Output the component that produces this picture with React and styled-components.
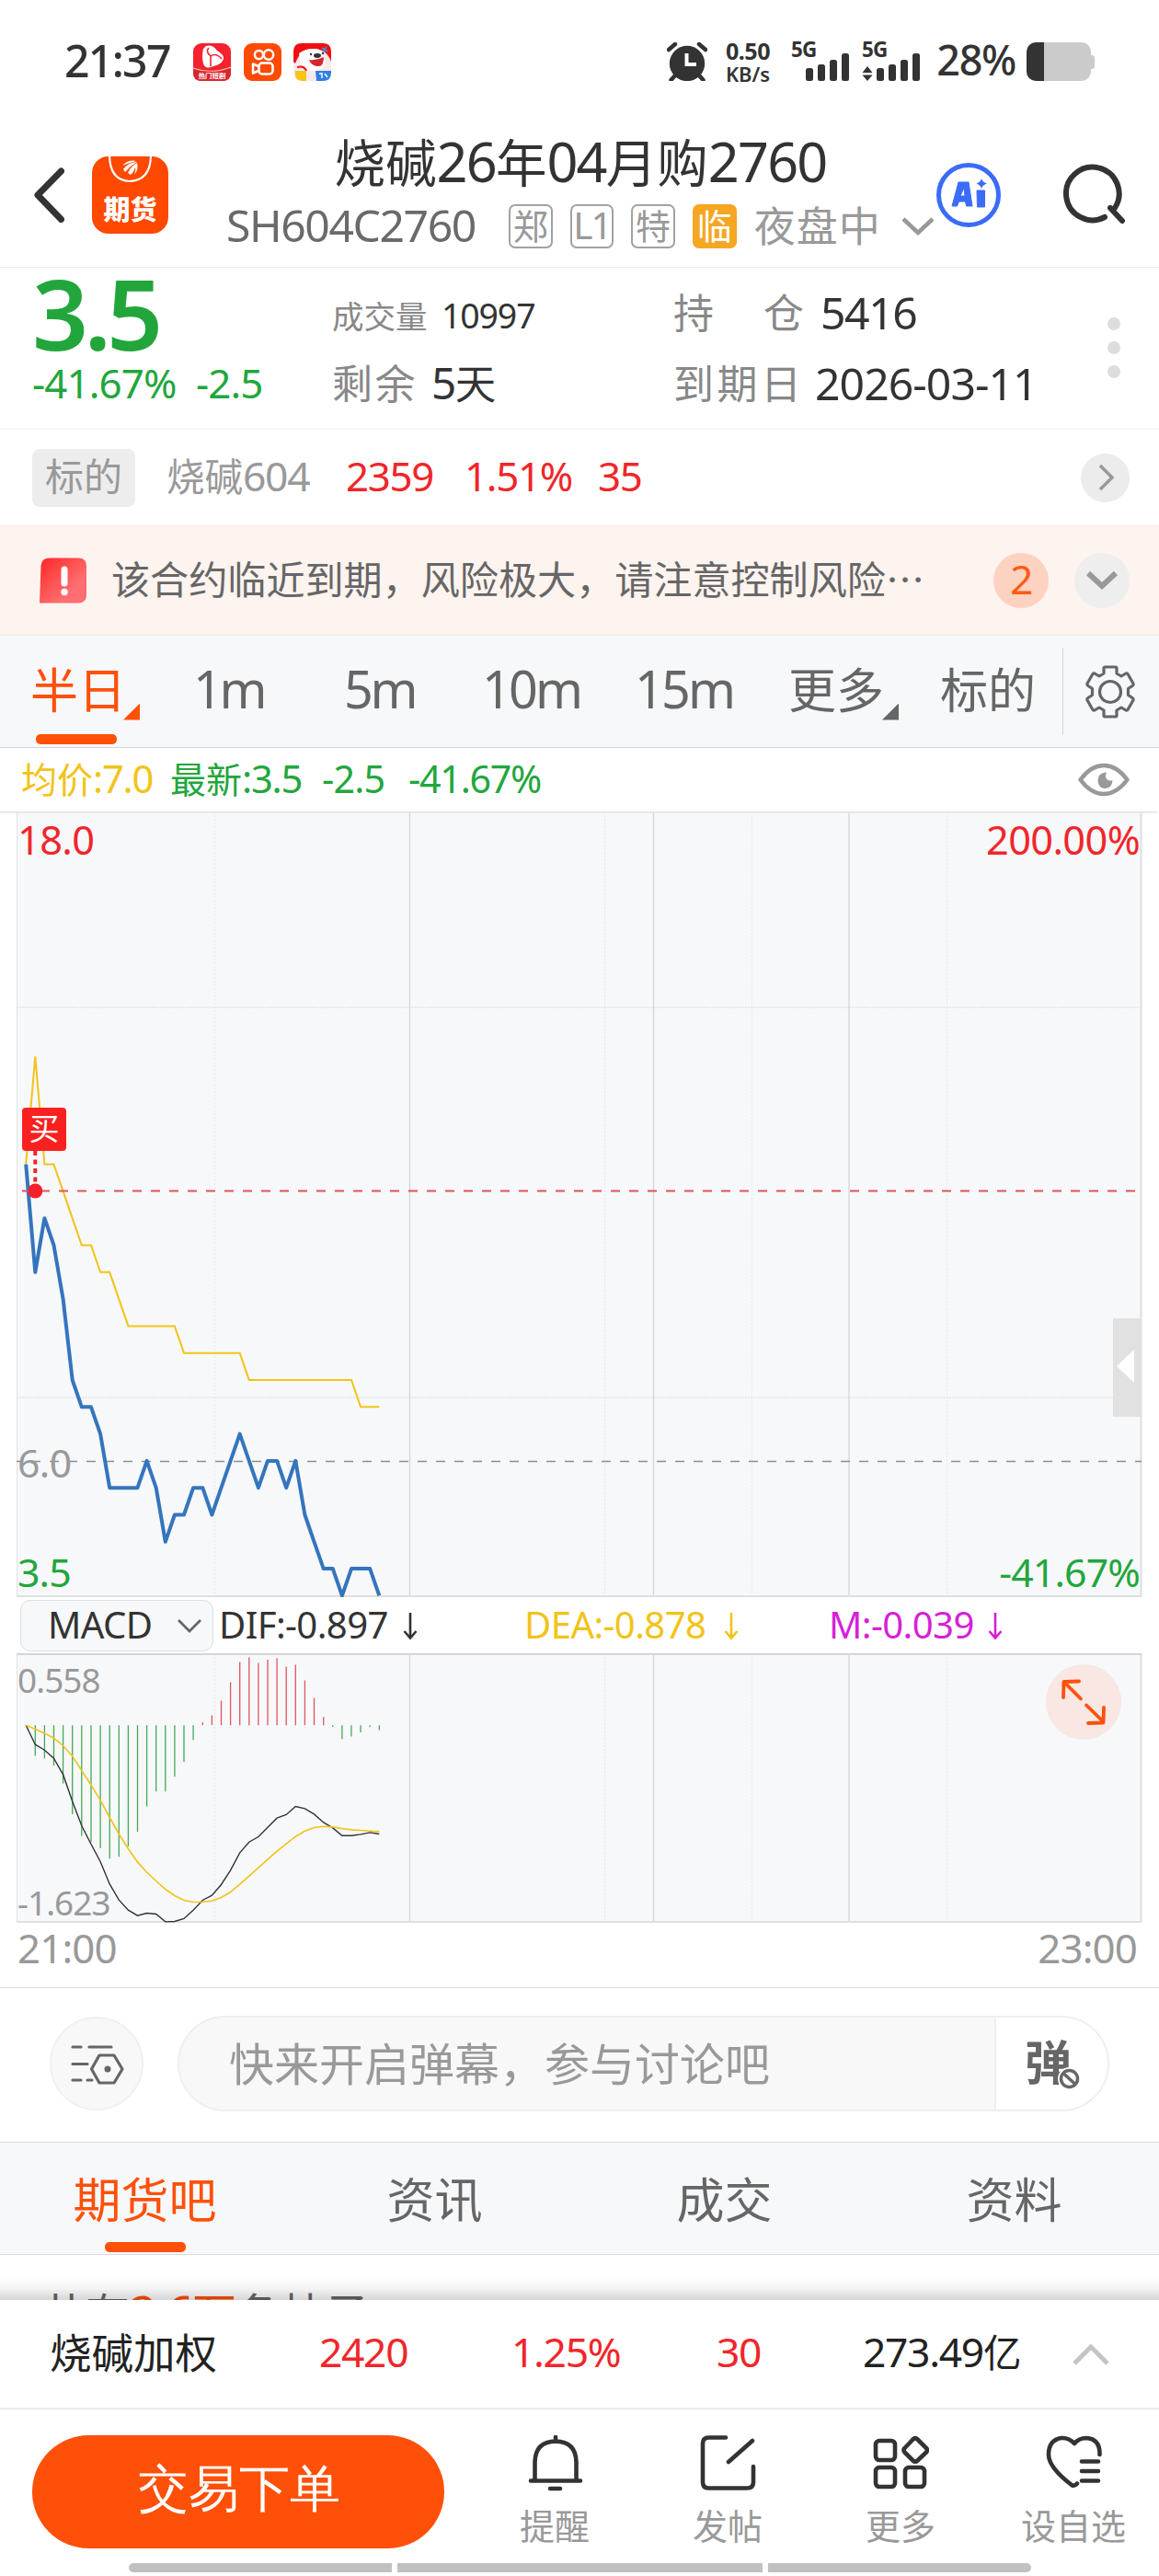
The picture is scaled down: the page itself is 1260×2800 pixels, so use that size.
import React from 'react';
import styled, { createGlobalStyle } from 'styled-components';

const RED = '#f0262a';
const GREEN = '#22a63c';
const ORANGE = '#ff500a';
const YELLOW = '#f2c318';
const GRAY = '#999';
const DARK = '#333';

const Global = createGlobalStyle`
  * { box-sizing: border-box; }
  html, body { margin: 0; padding: 0; background: #fff; }
  body { font-family: "Noto Sans CJK SC", sans-serif; }
  svg { display: block; flex: none; }
`;

/* ---------- text ---------- */
const TextBox = styled.span`
  display: block;
  flex: none;
  white-space: pre;
  line-height: 1;
  padding-bottom: 0.12em;
  font-size: ${(p) => p.$s}px;
  color: ${(p) => p.$c || DARK};
  font-weight: ${(p) => p.$b || 400};
  letter-spacing: ${(p) => p.$g || 0}px;
  width: ${(p) => (p.$w ? `${p.$w}px` : 'auto')};
  text-align: ${(p) => p.$a || 'left'};
`;
const Latin = styled.span`
  font-family: "Noto Sans", sans-serif;
  font-size: 1.07em;
  line-height: 0;
  letter-spacing: ${(p) => p.$ls}em;
`;

const LATIN_RUN = /([\x20-\x7e]+)/;
function Text({ children, ls = -0.03, ...rest }) {
  const parts = String(children).split(LATIN_RUN);
  return (
    <TextBox {...rest}>
      {parts.map((part, i) => (i % 2 ? <Latin key={i} $ls={ls}>{part}</Latin> : part))}
    </TextBox>
  );
}

/* ---------- shared layout ---------- */
const Page = styled.div`
  width: 1260px;
  height: 2800px;
  overflow: hidden;
  background: #fff;
  display: flex;
  flex-direction: column;
`;
const Row = styled.div`
  display: flex;
  align-items: center;
  flex: none;
  height: ${(p) => p.$h}px;
`;
const Spacer = styled.div`flex: 1;`;
const Disc = styled.div`
  display: flex;
  align-items: center;
  justify-content: center;
  flex: none;
  width: ${(p) => p.$d}px;
  height: ${(p) => p.$d}px;
  border-radius: 50%;
  background: ${(p) => p.$bg};
`;

/* ---------- status bar ---------- */
const Status = styled(Row)`
  padding: 0 70px 0 70px;
`;
const AppIcons = styled.div`
  display: flex;
  gap: 13.5px;
`;
const NetSpeed = styled.div`
  display: flex;
  flex-direction: column;
  align-items: center;
  justify-content: space-between;
  width: 54px;
  height: 46px;
  margin-left: 17px;
`;
const Signal = styled.div`
  display: flex;
  flex-direction: column;
  width: 66px;
  height: 42px;
  margin-left: ${(p) => p.$ml}px;
`;
const SignalLabel = styled.div`height: 12px; margin-top: -3px;`;
const Battery = styled.div`
  width: 70px;
  height: 42px;
  border-radius: 10px;
  margin-left: 12px;
  background: linear-gradient(90deg, #333 19px, #cbcbcb 19px);
`;
const BatteryTip = styled.div`
  width: 4px;
  height: 15px;
  border-radius: 0 3px 3px 0;
  background: #cbcbcb;
`;

function StatusBar() {
  return (
    <Status $h={134}>
      <Text $s={45} $b={500} $w={140} ls={-0.035}>21:37</Text>
      <AppIcons>
        <svg width="41" height="41" viewBox="0 0 41 41">
          <rect width="41" height="41" rx="9" fill="#f3222e" />
          <path d="M0 27 Q20 34 41 26 V32 Q41 41 32 41 H9 Q0 41 0 32Z" fill="#d9262e" />
          <path d="M0 27 Q20 34 41 26" stroke="#f9b5a5" strokeWidth="1.2" fill="none" />
          <path d="M14 3 Q21 1 26 8 Q34 13 33 17 Q31 23 22 25 Q13 29 11 22 Q9 14 11 6Z" fill="#fff" />
          <path d="M17 5 Q13 9 19 14 L19 25 M19 14 Q25 10 31 17" stroke="#f3222e" strokeWidth="1.6" fill="none" />
          <text x="20.5" y="38" fontSize="7.4" fontWeight="700" fill="#fff" textAnchor="middle" fontFamily="Noto Sans CJK SC">热门短剧</text>
        </svg>
        <svg width="41" height="41" viewBox="0 0 41 41">
          <rect width="41" height="41" rx="9" fill="#ff4a06" />
          <g fill="none" stroke="#fff" strokeWidth="2.5">
            <circle cx="16.5" cy="12.5" r="4.6" />
            <circle cx="27" cy="12.5" r="5.2" />
            <rect x="16.5" y="21.5" width="15" height="12" rx="3.5" />
            <path d="M16 25 L10 22.5 V32.5 L16 30" strokeLinejoin="round" />
          </g>
        </svg>
        <svg width="41" height="41" viewBox="0 0 41 41">
          <rect width="41" height="41" rx="9" fill="#f8e9ea" />
          <path d="M0 20 V9 Q0 0 9 0 H32 Q41 0 41 9 V20 Q36 6 22 6 Q8 5 2 22Z" fill="#f20d12" />
          <path d="M6 11 Q16 4 28 7 Q36 14 34 25 Q28 31 17 30 Q9 26 8 20Z" fill="#fff" />
          <ellipse cx="26" cy="13.5" rx="4" ry="2.4" fill="#333" />
          <circle cx="19" cy="12" r="1.2" fill="#333" />
          <circle cx="32" cy="11" r="1.2" fill="#333" />
          <path d="M17 18 Q25 19 33 15 Q33 26 26 25 Q19 24 17 18Z" fill="#d8242a" />
          <path d="M31 5 L37 9 M36 4 L32 9" stroke="#4a90c8" strokeWidth="2" />
          <path d="M4 26 Q12 24 14 30" stroke="#f20d12" strokeWidth="2" fill="none" />
          <path d="M2 30 H14 V41 H9 Q2 40 2 34Z" fill="#fcc419" />
          <path d="M24 30 H41 V32 Q41 41 32 41 H25Z" fill="#2f7fe6" />
          <path d="M28 33 h3 v5 M34 33 l3 4" stroke="#fff" strokeWidth="1.5" fill="none" />
        </svg>
      </AppIcons>
      <Spacer />
      <svg width="44" height="42" viewBox="0 0 44 42">
        <circle cx="22" cy="23" r="19.2" fill={DARK} />
        <path d="M2 8 L9 2 M42 8 L35 2" stroke={DARK} strokeWidth="4.5" strokeLinecap="round" />
        <path d="M9 36 L4.500 41 M35 36 L39.500 41" stroke={DARK} strokeWidth="4.500" strokeLinecap="round" />
        <path d="M21.500 12 V24 H32" stroke="#fff" strokeWidth="4" fill="none" />
      </svg>
      <NetSpeed>
        <Text $s={23.500} $b={700} ls={-0.02}>0.50</Text>
        <Text $s={20.500} $b={600} ls={0}>KB/s</Text>
      </NetSpeed>
      <Signal $ml={20}>
        <SignalLabel><Text $s={21} $b={700} ls={-0.04}>5G</Text></SignalLabel>
        <svg width="66" height="33" viewBox="0 0 66 33">
          {[[16, 16], [29, 12], [42, 7], [55, 0]].map(([x, y]) => (
            <rect key={x} x={x} y={y + 3} width="8" height={30 - y} rx="2.500" fill={DARK} />
          ))}
        </svg>
      </Signal>
      <Signal $ml={11}>
        <SignalLabel><Text $s={21} $b={700} ls={-0.04}>5G</Text></SignalLabel>
        <svg width="66" height="33" viewBox="0 0 66 33">
          <path d="M0.500 24 L6 17 L11.500 24Z M0.500 26.500 L6 33 L11.500 26.500Z" fill={DARK} />
          {[[16, 16], [29, 12], [42, 7], [55, 0]].map(([x, y]) => (
            <rect key={x} x={x} y={y + 3} width="8" height={30 - y} rx="2.500" fill={DARK} />
          ))}
        </svg>
      </Signal>
      <Text $s={42} $b={500} $w={101} $a="right" ls={-0.03}>28%</Text>
      <Battery />
      <BatteryTip />
    </Status>
  );
}

/* ---------- header ---------- */
const HeaderBar = styled(Row)`
  padding-left: 37px;
  border-bottom: 1px solid #eaeaea;
`;
const AppLogo = styled.div`
  position: relative;
  display: flex;
  flex: none;
  align-items: flex-end;
  justify-content: center;
  width: 83px;
  height: 84px;
  padding-bottom: 10px;
  margin-left: 30px;
  border-radius: 18px;
  background: #ff4800;
  overflow: hidden;
`;
const LogoMark = styled.svg`
  position: absolute;
  top: 0;
  left: 0;
`;
const TitleCol = styled.div`
  width: 770px;
  margin-left: 63px;
  flex: none;
`;
const TitleRow = styled(Row)`justify-content: center;`;
const Tag = styled.div`
  display: flex;
  align-items: center;
  justify-content: center;
  flex: none;
  width: 47.500px;
  height: 47.500px;
  margin-right: 19.200px;
  border-radius: 7px;
  border: 2px solid ${(p) => (p.$on ? '#f5a623' : '#a2a2a2')};
  background: ${(p) => (p.$on ? '#f5a623' : '#fff')};
`;

function Header() {
  return (
    <HeaderBar $h={157}>
      <svg width="33" height="60" viewBox="0 0 33 60">
        <path d="M29.500 4 L4 30 L29.500 56.500" stroke={DARK} strokeWidth="7" strokeLinecap="round" strokeLinejoin="round" fill="none" />
      </svg>
      <AppLogo>
        <LogoMark width="83" height="40" viewBox="0 0 83 40">
          <path d="M19 -2 Q19 26 41 27 Q64 26 64 -2" stroke="#fff" strokeWidth="2.200" fill="none" />
          <path d="M33 10 Q40 3 48 5 Q40 7 33 10Z M34 14 Q40 6 49 6 Q42 10 36 17Z M39 18 Q42 11 49 7 Q51 14 46 20 Q48 14 47 12 Q45 18 42 20Z" fill="#fff" />
        </LogoMark>
        <Text $s={29} $b={900} $c="#fff">期货</Text>
      </AppLogo>
      <TitleCol>
        <TitleRow $h={68}><Text $s={55.500}>烧碱26年04月购2760</Text></TitleRow>
        <Row $h={68}>
          <Text $s={45} $c="#6a6a6a" $w={307}>SH604C2760</Text>
          <Tag><Text $s={38} $c={GRAY}>郑</Text></Tag>
          <Tag><Text $s={38} $c={GRAY} ls={-0.05}>L1</Text></Tag>
          <Tag><Text $s={38} $c={GRAY}>特</Text></Tag>
          <Tag $on><Text $s={38} $c="#fff">临</Text></Tag>
          <Text $s={45} $c={GRAY} $w={160} $g={1}>夜盘中</Text>
          <svg width="36" height="22" viewBox="0 0 36 22">
            <path d="M2 3 L18 18 L34 3" stroke={GRAY} strokeWidth="4.500" fill="none" />
          </svg>
        </Row>
      </TitleCol>
      <svg width="72" height="72" viewBox="0 0 72 72">
        <circle cx="37" cy="36" r="32.500" stroke="#3b6cf6" strokeWidth="5" fill="none" />
        <path d="M19 48 L26 22 H37 L41 48 H34.500 L33.600 43 H26.500 L24.500 48Z M28 37 H33 L32 28Z" fill="#3b6cf6" fillRule="evenodd" stroke="#3b6cf6" strokeLinejoin="round" />
        <path d="M46 31 H54.500 V49 H46.500Z" fill="#3b6cf6" stroke="#3b6cf6" strokeLinejoin="round" />
        <path d="M51 18 Q52 22 57 23.500 Q52 25 51 29 Q50 25 45.500 23.500 Q50 22 51 18Z" fill="#3b6cf6" />
      </svg>
      <Spacer />
      <svg width="104" height="72" viewBox="0 0 104 72">
        <path d="M45 60 A28.800 28.800 0 1 1 56 50 M51 50 L64 64" stroke={DARK} strokeWidth="6" fill="none" strokeLinecap="round" />
      </svg>
    </HeaderBar>
  );
}

/* ---------- quote ---------- */
const Quote = styled.section`
  display: flex;
  flex: none;
  height: 176px;
  padding-left: 35px;
  border-bottom: 1px solid #f1f1f1;
`;
const QuoteCol = styled.div`
  width: ${(p) => p.$w}px;
  flex: none;
`;
const Dots = styled.div`
  display: flex;
  flex-direction: column;
  gap: 12px;
  margin: 54px 0 0 71px;
`;
const Dot = styled.i`
  width: 14px;
  height: 14px;
  border-radius: 50%;
  background: #ddd;
`;

function QuotePanel() {
  return (
    <Quote>
      <QuoteCol $w={326}>
        <Row $h={106}><Text $s={100} $b={600} $c={GREEN} ls={-0.045}>3.5</Text></Row>
        <Row $h={42}>
          <Text $s={41} $c={GREEN} $w={178} ls={-0.02}>-41.67%</Text>
          <Text $s={41} $c={GREEN} ls={-0.02}>-2.5</Text>
        </Row>
      </QuoteCol>
      <QuoteCol $w={371}>
        <Row $h={106}>
          <Text $s={34.500} $c="#888" $w={119}>成交量</Text>
          <Text $s={35}>10997</Text>
        </Row>
        <Row $h={42}>
          <Text $s={44} $c="#888" $g={2.500} $w={108}>剩余</Text>
          <Text $s={44.500}>5天</Text>
        </Row>
      </QuoteCol>
      <QuoteCol $w={401}>
        <Row $h={100}>
          <Text $s={44} $c="#888" $w={98}>持</Text>
          <Text $s={44} $c="#888" $w={62}>仓</Text>
          <Text $s={45}>5416</Text>
        </Row>
        <Row $h={54}>
          <Text $s={44} $c="#888" $g={3.500} $w={154}>到期日</Text>
          <Text $s={45} ls={-0.02}>2026-03-11</Text>
        </Row>
      </QuoteCol>
      <Dots><Dot /><Dot /><Dot /></Dots>
    </Quote>
  );
}

const UnderlyingRow = styled(Row)`padding: 0 32px 0 35px;`;
const Badge = styled.div`
  display: flex;
  align-items: center;
  justify-content: center;
  width: 112px;
  height: 63px;
  margin-right: 34px;
  border-radius: 8px;
  background: #ededed;
`;

function Underlying() {
  return (
    <UnderlyingRow $h={104}>
      <Badge><Text $s={42} $c={GRAY}>标的</Text></Badge>
      <Text $s={41.500} $c={GRAY} $w={195}>烧碱604</Text>
      <Text $s={41} $c={RED} $w={129}>2359</Text>
      <Text $s={41} $c={RED} $w={145}>1.51%</Text>
      <Text $s={41} $c={RED}>35</Text>
      <Spacer />
      <Disc $d={53} $bg="#ececec">
        <svg width="20" height="32" viewBox="0 0 20 32">
          <path d="M4 3 L17 16 L4 29" stroke={GRAY} strokeWidth="3.500" fill="none" />
        </svg>
      </Disc>
    </UnderlyingRow>
  );
}

const NoticeBar = styled(Row)`
  padding: 0 32px 0 43px;
  background: #fdf3ef;
  border-top: 1px solid #f1e8e5;
`;
const NoticeText = styled.div`
  width: 1010px;
  margin-left: 26px;
  width: 960px;
`;
const DiscGap = styled.div`width: 28px;`;

function Notice() {
  return (
    <NoticeBar $h={119}>
      <svg width="52" height="50" viewBox="0 0 52 50">
        <defs>
          <linearGradient id="alert" x1="0" y1="0" x2="1" y2="1">
            <stop offset="0" stopColor="#ff2626" />
            <stop offset="0.700" stopColor="#ff6e70" />
          </linearGradient>
        </defs>
        <path d="M1.500 9 Q2 0.500 11 0.500 H42 Q51 0.500 51 9 V41 Q51 49.500 42 49.500 H0Z" fill="url(#alert)" />
        <rect x="23.500" y="9.500" width="7" height="22" rx="3.500" fill="#fff" />
        <circle cx="27" cy="37.500" r="3.700" fill="#fff" />
      </svg>
      <NoticeText><Text $s={42.100} $c="#666">该合约临近到期，风险极大，请注意控制风险⋯</Text></NoticeText>
      <Spacer />
      <Disc $d={60} $bg="#fdd2c1"><Text $s={41} $c="#ff5a10">2</Text></Disc>
      <DiscGap />
      <Disc $d={60} $bg="#eeeeee">
        <svg width="34" height="24" viewBox="0 0 34 24">
          <path d="M2 4 L17 18 L32 4" stroke={GRAY} strokeWidth="6" fill="none" />
        </svg>
      </Disc>
    </NoticeBar>
  );
}

/* ---------- period tabs ---------- */
const PeriodBar = styled(Row)`
  padding: 0 26px 0 33px;
  background: #f7f8fa;
  border-top: 1px solid #eee;
  border-bottom: 1px solid #d3d4d8;
`;
const Period = styled.div`
  position: relative;
  display: flex;
  align-items: center;
  height: 100%;
  flex: none;
  width: ${(p) => p.$w}px;
`;
const Corner = styled.i`
  width: 18px;
  height: 18px;
  margin: 44px 0 0 -3px;
  background: ${(p) => p.$c};
  clip-path: polygon(100% 0, 100% 100%, 0 100%);
`;
const Underline = styled.i`
  position: absolute;
  left: ${(p) => p.$x};
  bottom: ${(p) => p.$y}px;
  width: 88px;
  height: 11px;
  border-radius: 5px;
  background: ${ORANGE};
`;
const Rule = styled.div`
  width: 1px;
  height: 95px;
  background: #d5d6da;
`;
const Legend = styled(Row)`
  padding: 0 32px 0 23px;
`;

function Periods() {
  return (
    <>
      <PeriodBar $h={123}>
        <Period $w={177}>
          <Text $s={52} $c={ORANGE} $w={104}>半日</Text><Corner $c={ORANGE} />
          <Underline $x="6px" $y={3} />
        </Period>
        <Period $w={164}><Text $s={52} $c="#666" ls={-0.06}>1m</Text></Period>
        <Period $w={150}><Text $s={52} $c="#666" ls={-0.06}>5m</Text></Period>
        <Period $w={166}><Text $s={52} $c="#666" ls={-0.05}>10m</Text></Period>
        <Period $w={167}><Text $s={52} $c="#666" ls={-0.05}>15m</Text></Period>
        <Period $w={165}><Text $s={52} $c="#666" $w={105}>更多</Text><Corner $c="#666" /></Period>
        <Period $w={133}><Text $s={52} $c="#666">标的</Text></Period>
        <Rule />
        <Spacer />
        <svg width="54" height="58" viewBox="-27 -29 54 58">
          <path
            d="M-7 -22 V-25.500 Q-7 -27 -5.500 -27 H5.500 Q7 -27 7 -25.500 V-20 L12 -17 L17 -20 Q18.500 -20.500 19.300 -19 L25 -9 Q25.500 -7.500 24 -6.500 L19.500 -3.500 V3.500 L24 6.500 Q25.500 7.500 25 9 L19.300 19 Q18.500 20.500 17 20 L12 17 L7 20 V25.500 Q7 27 5.500 27 H-5.500 Q-7 27 -7 25.500 V20 L-12 17 L-17 20 Q-18.500 20.500 -19.300 19 L-25 9 Q-25.500 7.500 -24 6.500 L-19.500 3.500 V-3.500 L-24 -6.500 Q-25.500 -7.500 -25 -9 L-19.300 -19 Q-18.500 -20.500 -17 -20 L-12 -17 L-7 -20Z"
            fill="none" stroke="#666" strokeWidth="3.200" strokeLinejoin="round"
          />
          <circle r="11.500" fill="none" stroke="#666" strokeWidth="3.200" />
        </svg>
      </PeriodBar>
      <Legend $h={69}>
        <Text $s={39} $c={YELLOW} $w={162}>均价:7.0</Text>
        <Text $s={39} $c={GREEN} $w={165}>最新:3.5</Text>
        <Text $s={38.500} $c={GREEN} $w={94} ls={-0.02}>-2.5</Text>
        <Text $s={38.500} $c={GREEN} ls={-0.03}>-41.67%</Text>
        <Spacer />
        <svg width="56" height="37" viewBox="0 0 56 37">
          <path d="M2.500 18.500 Q14 3 28 3 Q42 3 53.500 18.500 Q42 34 28 34 Q14 34 2.500 18.500Z" fill="none" stroke={GRAY} strokeWidth="4.500" strokeLinejoin="round" />
          <path d="M29 10.500 Q21.500 12 21.500 19.500 Q22 28 29.500 28 Q37 27.500 37.500 19 Q33 20.500 31 17.500 Q29 14.500 31 11Z" fill={GRAY} />
        </svg>
      </Legend>
    </>
  );
}

/* ---------- charts ---------- */
const STEP = 10.108;
const X0 = 28.2;
const PRICE = [11.5, 9.5, 10.5, 10, 9, 7.5, 7, 7, 6.5, 5.5, 5.5, 5.5, 5.5, 6, 5.5, 4.5, 5, 5, 5.5, 5.5, 5, 5.5, 6, 6.5, 6, 5.5, 6, 6, 5.5, 6, 5, 4.5, 4, 4, 3.5, 4, 4, 4, 3.5];
const AVERAGE = [11.5, 13.5, 11.5, 11.5, 11, 10.5, 10, 10, 9.5, 9.5, 9, 8.5, 8.5, 8.5, 8.5, 8.5, 8.5, 8, 8, 8, 8, 8, 8, 8, 7.5, 7.5, 7.5, 7.5, 7.5, 7.5, 7.5, 7.5, 7.5, 7.5, 7.5, 7.5, 7, 7, 7];
/* MACD series as offsets from the zero axis, in thirds of a pixel */
const HIST = [0, 100, 108, 132, 190, 290, 361, 381, 401, 435, 429, 395, 348, 265, 216, 216, 168, 120, 48, -10, -32, -80, -140, -206, -221, -203, -214, -218, -191, -197, -146, -89, -27, 5, 45, 37, 23, 6, 16];
const DIF = [0, 63, 81, 108, 161, 248, 328, 388, 445, 518, 570, 603, 621, 613, 616, 641, 640, 631, 603, 571, 555, 520, 473, 416, 381, 364, 333, 303, 292, 265, 272, 290, 317, 335, 360, 360, 356, 350, 355];
const DEA = [0, 13, 26, 42, 67, 101, 148, 195, 245, 301, 355, 403, 446, 480, 508, 535, 556, 571, 577, 576, 573, 562, 544, 519, 492, 465, 438, 411, 387, 363, 345, 334, 330, 332, 337, 341, 343, 345, 347];

const px = (i) => X0 + i * STEP;
const line = (values, y) => values.map((v, i) => `${px(i).toFixed(1)},${y(v).toFixed(1)}`).join(' ');
const priceY = (v) => 852.4 - (v - 3.5) * 58.6;
const macdY = (v) => 78.200 + v / 3;

const Plot = styled.div`
  position: relative;
  flex: none;
  height: ${(p) => p.$h}px;
`;
const Mark = styled.div`
  position: absolute;
  top: ${(p) => p.$y}px;
  ${(p) => (p.$r ? `right: ${p.$r}px;` : `left: ${p.$x}px;`)}
`;
const BuyFlag = styled.div`
  position: absolute;
  left: 24px;
  top: 322px;
  width: 48px;
  height: 47px;
  display: flex;
  align-items: center;
  justify-content: center;
  border-radius: 4px;
  background: #fb2020;
`;

function Grid({ h, rows }) {
  return (
    <>
      <rect x="18" y="0" width="1223" height={h} fill="#f7f8fa" />
      {[233.5, 657.5, 817.5, 1029.5].map((x) => (
        <path key={x} d={`M${x} 0 V${h}`} stroke="#e6e7ea" strokeDasharray="2 2" />
      ))}
      {rows.map((y) => (
        <path key={y} d={`M18 ${y} H1241`} stroke="#dcdde0" strokeDasharray="2 1" />
      ))}
      {[445.5, 710.5, 923].map((x) => (
        <path key={x} d={`M${x} 0 V${h}`} stroke="#d4d5d8" strokeWidth="1.300" />
      ))}
      <path d={`M18.500 0 V${h}`} stroke="#e0e1e4" />
      <path d={`M1240.500 0 V${h}`} stroke="#dddee1" strokeWidth="2" />
      <path d={`M18 ${h - 1} H1241`} stroke="#dfe0e2" strokeWidth="2" />
    </>
  );
}

function PriceChart() {
  return (
    <Plot $h={854}>
      <svg width="1260" height="854" viewBox="0 0 1260 854">
        <Grid h={854} rows={[213, 637]} />
        <path d="M0 0 H1258" stroke="#e2e2e4" strokeWidth="3" />
        <path d="M18 706.500 H1241" stroke="#8d8d8d" strokeWidth="1.500" strokeDasharray="10 10" strokeDashoffset="4" />
        <polyline points={line(AVERAGE, priceY)} fill="none" stroke={YELLOW} strokeWidth="2" />
        <polyline points={line(PRICE, priceY)} fill="none" stroke="#3475bd" strokeWidth="4" strokeLinejoin="round" />
        <path d="M24 412.500 H1241" stroke="#dd5558" strokeWidth="2" strokeDasharray="10 10" />
        <path d="M38.300 369 V406" stroke="#f32227" strokeWidth="4" strokeDasharray="5 4.500" />
        <circle cx="38.300" cy="412.500" r="8" fill="#f5212a" />
        <rect x="1210" y="551" width="31" height="107" fill="#e1e1e1" />
        <path d="M1214 603 L1233 585 V621Z" fill="#fff" />
      </svg>
      <BuyFlag><Text $s={33} $c="#fff">买</Text></BuyFlag>
      <Mark $x={19} $y={10}><Text $s={40.500} $c={RED} ls={-0.015}>18.0</Text></Mark>
      <Mark $r={21} $y={10}><Text $s={40.500} $c={RED} ls={-0.015}>200.00%</Text></Mark>
      <Mark $x={19} $y={687}><Text $s={40} $c={GRAY} ls={-0.015}>6.0</Text></Mark>
      <Mark $x={19} $y={806}><Text $s={40} $c={GREEN} ls={-0.02}>3.5</Text></Mark>
      <Mark $r={21} $y={806}><Text $s={40} $c={GREEN} ls={-0.02}>-41.67%</Text></Mark>
    </Plot>
  );
}

const IndicatorRow = styled(Row)`
  padding-left: 22px;
`;
const Select = styled.div`
  display: flex;
  align-items: center;
  flex: none;
  width: 210px;
  height: 56px;
  padding-left: 29px;
  margin-right: 6px;
  border: 1px solid #dcdde0;
  border-radius: 11px;
  background: #f7f8fa;
`;
const Value = styled.div`
  display: flex;
  align-items: center;
  flex: none;
  width: ${(p) => p.$w}px;
`;

function Indicator({ label, color, width, text }) {
  return (
    <Value $w={width}>
      <Text $s={37.500} $c={color} $w={text} ls={-0.015}>{label}</Text>
      <svg width="16" height="32" viewBox="0 0 16 32">
        <path d="M8 2 V29 M1.500 22 L8 29.500 L14.500 22" stroke={color} strokeWidth="2.600" fill="none" />
      </svg>
    </Value>
  );
}

const ExpandButton = styled(Disc)`
  position: absolute;
  left: 1137px;
  top: 12px;
`;
const TimeAxis = styled(Row)`
  justify-content: space-between;
  padding: 4px 24px 0 19px;
  margin-bottom: 16px;
`;

function MacdChart() {
  return (
    <>
      <IndicatorRow $h={61}>
        <Select>
          <Text $s={37.500} $w={140} ls={-0.015}>MACD</Text>
          <svg width="28" height="18" viewBox="0 0 28 18">
            <path d="M2 3 L14 15 L26 3" stroke="#666" strokeWidth="2.800" fill="none" />
          </svg>
        </Select>
        <Indicator label="DIF:-0.897" color={DARK} width={332} text={200} />
        <Indicator label="DEA:-0.878" color={YELLOW} width={331} text={217} />
        <Indicator label="M:-0.039" color="#d81fd8" width={200} text={173} />
      </IndicatorRow>
      <Plot $h={293}>
        <svg width="1260" height="293" viewBox="0 0 1260 293">
          <Grid h={293} rows={[]} />
          <path d="M18 1 H1241" stroke="#d5d6d9" strokeWidth="2" />
          {HIST.map((v, i) => (
            <path key={i} d={`M${px(i).toFixed(1)} ${macdY(0)} V${macdY(v).toFixed(1)}`} stroke={v < 0 ? '#e0555a' : '#43aa58'} strokeWidth="1.300" />
          ))}
          <polyline points={line(DIF, macdY)} fill="none" stroke="#333" strokeWidth="1.400" />
          <polyline points={line(DEA, macdY)} fill="none" stroke={YELLOW} strokeWidth="1.600" />
        </svg>
        <Mark $x={19} $y={11}><Text $s={34.500} $c={GRAY} ls={-0.025}>0.558</Text></Mark>
        <Mark $x={19} $y={253}><Text $s={34.500} $c={GRAY} ls={-0.025}>-1.623</Text></Mark>
        <ExpandButton $d={82} $bg="#f8e7e3">
          <svg width="52" height="52" viewBox="0 0 52 52">
            <path d="M4 21 L4.500 4 L21 3.500 M5.500 5 L23 22.500 M29 29.500 L47 47 M48 32 L47.500 48.500 L31 49" stroke={ORANGE} strokeWidth="3.800" fill="none" strokeLinecap="round" strokeLinejoin="round" />
          </svg>
        </ExpandButton>
      </Plot>
      <TimeAxis $h={54}>
        <Text $s={41} $c={GRAY} ls={-0.02}>21:00</Text>
        <Text $s={41} $c={GRAY} ls={-0.02}>23:00</Text>
      </TimeAxis>
    </>
  );
}

/* ---------- discussion bar ---------- */
const BarrageRow = styled(Row)`
  padding: 0 54px 3px;
  border-top: 1px solid #dcdde0;
`;
const BarrageSettings = styled(Disc)`
  border: 2px solid #f0f0f0;
  margin-right: 37px;
`;
const Pill = styled.div`
  display: flex;
  align-items: center;
  flex: 1;
  height: 104px;
  padding-left: 54px;
  border: 2px solid #efefef;
  border-radius: 52px;
  background: #f8f8f8;
  overflow: hidden;
`;
const BarrageToggle = styled.div`
  position: relative;
  display: flex;
  align-items: center;
  width: 123px;
  height: 100%;
  padding-left: 31px;
  border-left: 2px solid #efefef;
  background: #fff;
`;
const BlockIcon = styled.svg`
  position: absolute;
  left: 67px;
  top: 54px;
`;

function Barrage() {
  return (
    <BarrageRow $h={168}>
      <BarrageSettings $d={102} $bg="#f8f8f8">
        <svg width="60" height="46" viewBox="0 0 60 46">
          <g stroke="#666" strokeWidth="3.200" fill="none" strokeLinecap="round" strokeLinejoin="round">
            <path d="M4 5 H13 M22 5 H46 M4 23.500 H20 M4 41 H13 M20 41 H25" />
            <path d="M33 14 H49 L58 29 L49 44 H33 L24.500 29Z" />
          </g>
          <circle cx="42" cy="29" r="3.500" fill="#666" />
        </svg>
      </BarrageSettings>
      <Pill>
        <Text $s={49} $c={GRAY}>快来开启弹幕，参与讨论吧</Text>
        <Spacer />
        <BarrageToggle>
          <Text $s={51} $c="#666" $b={600}>弹</Text>
          <BlockIcon width="25" height="25" viewBox="0 0 25 25">
            <circle cx="12.500" cy="12.500" r="12.500" fill="#fff" />
            <circle cx="12.500" cy="12.500" r="9" fill="#fff" stroke="#666" strokeWidth="3.500" />
            <path d="M6.500 7 L18.500 18" stroke="#666" strokeWidth="3.500" />
          </BlockIcon>
        </BarrageToggle>
      </Pill>
    </BarrageRow>
  );
}

const Tabs = styled.nav`
  display: grid;
  grid-template-columns: repeat(4, 1fr);
  flex: none;
  height: 123px;
  border-top: 1px solid #dadbde;
  border-bottom: 1px solid #dadbde;
  background: #f7f8fa;
`;
const Tab = styled.div`
  position: relative;
  display: flex;
  align-items: center;
  justify-content: center;
  padding-top: 5px;
`;
const Peek = styled.div`
  position: relative;
  display: flex;
  flex: none;
  height: 49px;
  padding: 37px 0 0 45px;
  overflow: hidden;
  &::after {
    content: '';
    position: absolute;
    inset: 22px 0 0 0;
    background: linear-gradient(180deg, rgba(0, 0, 0, 0), rgba(0, 0, 0, 0.040) 50%, rgba(0, 0, 0, 0.160));
  }
`;

/* ---------- bottom ---------- */
const IndexBar = styled(Row)`
  padding: 0 54px 0 54px;
  border-bottom: 2px solid #ececec;
`;
const ActionRow = styled.div`
  display: flex;
  flex: none;
  height: 167px;
  padding: 28px 0 0 35px;
`;
const TradeButton = styled.button`
  display: flex;
  align-items: center;
  justify-content: center;
  flex: none;
  width: 448px;
  height: 123px;
  padding: 0 0 0 2px;
  border: 0;
  border-radius: 62px;
  background: ${ORANGE};
`;
const Action = styled.div`
  display: flex;
  flex-direction: column;
  align-items: center;
  flex: none;
  width: 188px;
  margin-left: ${(p) => p.$ml || 0}px;
  gap: 17px;
`;
const HomeBars = styled.div`
  display: grid;
  grid-template-columns: 286px 397px 286px;
  gap: 6px;
  justify-content: center;
  height: 10px;
  flex: none;
`;
const HomeBar = styled.i`
  background: #c1c1c1;
  border-radius: ${(p) => p.$r};
`;

const ICONS = {
  bell: <path d="M31 2 V6 M8.500 49 V29 Q9 7 31 6.500 Q53 7 53.500 29 V49 M4 49.500 H58 M25 58 H36" />,
  post: <path d="M28 2.500 H10 Q3 2.500 3 9 V51 Q3 57.500 10 57.500 H51 Q58 57.500 58 51 V34 M57 6 L31 29" />,
  grid: (
    <>
      <rect x="3" y="6" width="21" height="21" rx="4" />
      <rect x="3" y="35" width="21" height="21" rx="4" />
      <rect x="35" y="35" width="21" height="21" rx="4" />
      <path d="M43.500 4.500 Q46 2 48.500 4.500 L58 14 Q60 16 58 18.500 L48.500 27.500 Q46 30 43.500 27.500 L34.500 18.500 Q32.500 16 34.500 14Z" />
    </>
  ),
  heart: <path d="M58.500 21 Q59 4 44 3 Q36 3 31 9 Q25 2.500 17 3 Q3 5 3 21 Q3 35 28 54 Q31 56 34 52.500 M39 28.500 H57 M39 39 H57 M39 49.500 H57" />,
};

function ActionItem({ icon, label, ml }) {
  return (
    <Action $ml={ml}>
      <svg width="61" height="61" viewBox="0 0 61 61" fill="none" stroke={DARK} strokeWidth="4.600" strokeLinecap="round" strokeLinejoin="round">
        {ICONS[icon]}
      </svg>
      <Text $s={38} $c={GRAY}>{label}</Text>
    </Action>
  );
}

export default function App() {
  return (
    <Page>
      <Global />
      <StatusBar />
      <Header />
      <QuotePanel />
      <Underlying />
      <Notice />
      <Periods />
      <PriceChart />
      <MacdChart />
      <Barrage />
      <Tabs>
        <Tab><Text $s={52} $c={ORANGE}>期货吧</Text><Underline $x="114px" $y={2} /></Tab>
        <Tab><Text $s={52} $c="#666">资讯</Text></Tab>
        <Tab><Text $s={52} $c="#666">成交</Text></Tab>
        <Tab><Text $s={52} $c="#666">资料</Text></Tab>
      </Tabs>
      <Peek>
        <Text $s={48} $c="#666">共有</Text>
        <Text $s={48} $c={ORANGE}>2.6万</Text>
        <Text $s={48} $c="#666">条帖子</Text>
      </Peek>
      <IndexBar $h={119}>
        <Text $s={45.500} $c="#222" $w={293}>烧碱加权</Text>
        <Text $s={41.500} $c={RED} $w={209}>2420</Text>
        <Text $s={41.500} $c={RED} $w={223}>1.25%</Text>
        <Text $s={41.500} $c={RED} $w={159}>30</Text>
        <Text $s={41.500} $c="#222">273.49亿</Text>
        <Spacer />
        <svg width="40" height="26" viewBox="0 0 40 26">
          <path d="M2 23 L20 5 L38 23" stroke="#c4c4c4" strokeWidth="5" fill="none" />
        </svg>
      </IndexBar>
      <ActionRow>
        <TradeButton><Text $s={55} $c="#fff" $b={500}>交易下单</Text></TradeButton>
        <ActionItem icon="bell" label="提醒" ml={26} />
        <ActionItem icon="post" label="发帖" />
        <ActionItem icon="grid" label="更多" />
        <ActionItem icon="heart" label="设自选" />
      </ActionRow>
      <HomeBars>
        <HomeBar $r="5px 0 0 5px" />
        <HomeBar $r="0" />
        <HomeBar $r="0 5px 5px 0" />
      </HomeBars>
    </Page>
  );
}
